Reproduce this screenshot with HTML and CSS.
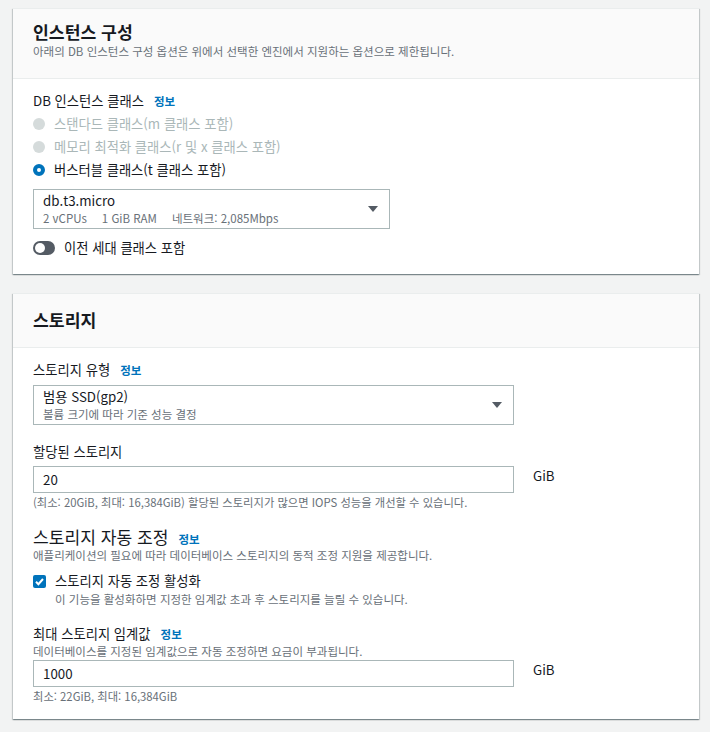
FILE: index.html
```html
<!DOCTYPE html>
<html lang="ko">
<head>
  <meta charset="UTF-8">
  <meta name="viewport" content="width=device-width, initial-scale=1.0">
  <title>DB 인스턴스 구성</title>
  <link rel="stylesheet" href="styles.css">
</head>
<body>
  <div class="page">
    <section class="card">
      <div class="card-header with-desc">
        <h2>인스턴스 구성</h2>
        <p class="desc">아래의 DB 인스턴스 구성 옵션은 위에서 선택한 엔진에서 지원하는 옵션으로 제한됩니다.</p>
      </div>
      <div class="card-body">
        <div class="label">DB 인스턴스 클래스<a class="info" href="#">정보</a></div>
        <div class="radio-list">
          <div class="radio disabled"><span class="dot"></span>스탠다드 클래스(m 클래스 포함)</div>
          <div class="radio disabled"><span class="dot"></span>메모리 최적화 클래스(r 및 x 클래스 포함)</div>
          <div class="radio checked"><span class="dot"></span>버스터블 클래스(t 클래스 포함)</div>
        </div>
        <div class="select narrow">
          <div class="select-text">
            <div class="select-main">db.t3.micro</div>
            <div class="select-sub"><span>2 vCPUs</span><span>1 GiB RAM</span><span>네트워크: 2,085Mbps</span></div>
          </div>
          <span class="caret"></span>
        </div>
        <div class="toggle-row"><span class="toggle"></span>이전 세대 클래스 포함</div>
      </div>
    </section>

    <section class="card">
      <div class="card-header">
        <h2>스토리지</h2>
      </div>
      <div class="card-body">
        <div class="label">스토리지 유형<a class="info" href="#">정보</a></div>
        <div class="select wide">
          <div class="select-text">
            <div class="select-main">범용 SSD(gp2)</div>
            <div class="select-sub"><span>볼륨 크기에 따라 기준 성능 결정</span></div>
          </div>
          <span class="caret"></span>
        </div>

        <div class="label spaced">할당된 스토리지</div>
        <div class="input-row">
          <div class="input">20</div>
          <span class="unit">GiB</span>
        </div>
        <p class="hint">(최소: 20GiB, 최대: 16,384GiB) 할당된 스토리지가 많으면 IOPS 성능을 개선할 수 있습니다.</p>

        <h3 class="subhead">스토리지 자동 조정<a class="info" href="#">정보</a></h3>
        <p class="desc">애플리케이션의 필요에 따라 데이터베이스 스토리지의 동적 조정 지원을 제공합니다.</p>
        <div class="check-row">
          <span class="checkbox">
            <svg width="13" height="13" viewBox="0 0 13 13"><polyline points="3,6.8 5.4,9.2 10,4" fill="none" stroke="#fff" stroke-width="2"/></svg>
          </span>
          스토리지 자동 조정 활성화
        </div>
        <p class="desc check-desc">이 기능을 활성화하면 지정한 임계값 초과 후 스토리지를 늘릴 수 있습니다.</p>

        <div class="label threshold">최대 스토리지 임계값<a class="info" href="#">정보</a></div>
        <p class="desc">데이터베이스를 지정된 임계값으로 자동 조정하면 요금이 부과됩니다.</p>
        <div class="input-row">
          <div class="input">1000</div>
          <span class="unit">GiB</span>
        </div>
        <p class="hint">최소: 22GiB, 최대: 16,384GiB</p>
      </div>
    </section>
  </div>
</body>
</html>
```

FILE: styles.css
```css
body {
  margin: 0;
  background-color: #f2f3f3;
  color: #16191f;
  font-family: "Noto Sans CJK KR", "Open Sans", sans-serif;
  font-size: 13.3px;
}
.page {
  display: flex;
  flex-direction: column;
  gap: 19px;
  padding: 8px 11px 12px 13px;
}
.card {
  background-color: #fff;
  border-top: 1px solid #eaeded;
  box-shadow: 0 1px 1px 0 rgba(0, 28, 36, .3), 1px 1px 1px 0 rgba(0, 28, 36, .15), -1px 1px 1px 0 rgba(0, 28, 36, .15);
}
.card-header {
  background-color: #fafafa;
  border-bottom: 1px solid #eaeded;
  padding: 15px 20px 16px;
}
.card-header.with-desc {
  padding: 12px 20px 18px;
}
.card-header h2 {
  margin: 0;
  font-size: 17.2px;
  font-weight: 700;
  line-height: 22px;
}
.desc {
  margin: 0;
  color: #687078;
  font-size: 11.5px;
  line-height: 15px;
}
.card-header .desc {
  line-height: 17px;
}
.card-body {
  padding: 11px 20px 15px;
}
.label {
  line-height: 22px;
}
.label.spaced {
  margin-top: 16px;
}
.label.threshold {
  margin-top: 17px;
  line-height: 20px;
}
.info {
  margin-left: 10px;
  color: #0073bb;
  font-size: 11.5px;
  font-weight: 700;
  text-decoration: none;
}
.radio {
  display: flex;
  align-items: center;
  gap: 9px;
  height: 23px;
}
.radio .dot {
  box-sizing: border-box;
  width: 12px;
  height: 12px;
  border-radius: 50%;
}
.radio.disabled {
  color: #aab7b8;
}
.radio.disabled .dot {
  background-color: #d5dbdb;
}
.radio.checked .dot {
  border: 4px solid #0073bb;
  background-color: #fff;
}
.select {
  box-sizing: border-box;
  display: flex;
  align-items: center;
  justify-content: space-between;
  height: 40px;
  margin-top: 8px;
  padding: 1px 11px 1px 9px;
  border: 1px solid #aab7b8;
}
.select.narrow {
  width: 357px;
}
.select.wide {
  width: 481px;
  margin-top: 4px;
}
.select-main {
  line-height: 19px;
}
.select-sub {
  color: #687078;
  font-size: 11.5px;
  line-height: 17px;
}
.select-sub span {
  margin-right: 15px;
}
.caret {
  width: 0;
  height: 0;
  border-left: 5px solid transparent;
  border-right: 5px solid transparent;
  border-top: 6px solid #545b64;
}
.toggle-row {
  display: flex;
  align-items: center;
  gap: 9px;
  margin-top: 8px;
  line-height: 22px;
}
.toggle {
  position: relative;
  width: 22px;
  height: 14px;
  border-radius: 7px;
  background-color: #545b64;
}
.toggle::after {
  content: "";
  position: absolute;
  left: 2px;
  top: 2px;
  width: 10px;
  height: 10px;
  border-radius: 50%;
  background-color: #fff;
}
.input-row {
  display: flex;
  align-items: flex-start;
  margin-top: 3px;
}
.desc + .input-row {
  margin-top: 1px;
}
.input {
  box-sizing: border-box;
  width: 481px;
  height: 27px;
  padding: 0 9px;
  border: 1px solid #aab7b8;
  line-height: 25px;
}
.unit {
  margin-left: 19px;
  line-height: 20px;
}
.hint {
  margin: 2px 0 0;
  color: #687078;
  font-size: 11.3px;
  line-height: 15px;
}
.subhead {
  margin: 18px 0 0;
  font-size: 17.1px;
  font-weight: 400;
  line-height: 18px;
}
.check-row {
  display: flex;
  align-items: center;
  gap: 9px;
  margin-top: 8px;
  line-height: 20px;
}
.checkbox {
  display: flex;
  width: 13px;
  height: 13px;
  border-radius: 2px;
  background-color: #0073bb;
}
.check-desc {
  margin-top: 1px;
  padding-left: 22px;
}
```
